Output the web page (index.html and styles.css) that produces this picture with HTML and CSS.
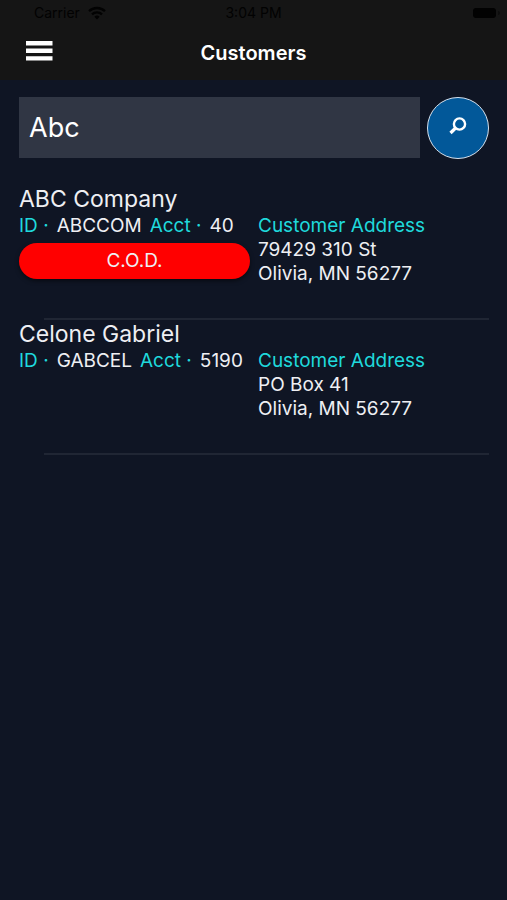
FILE: index.html
```html
<!DOCTYPE html>
<html lang="en">
<head>
<meta charset="utf-8">
<meta name="viewport" content="width=device-width, initial-scale=1">
<title>Customers</title>
<link rel="stylesheet" href="styles.css">
</head>
<body>
<header class="top">
  <div class="status">
    <span class="carrier">Carrier
      <svg width="18" height="14" viewBox="0 0 18 14" fill="none" stroke="currentColor" stroke-width="2.4" aria-hidden="true"><path d="M1 5.2a11.5 11.5 0 0 1 16 0M4 8.4a7.2 7.2 0 0 1 10 0"/><path d="M9 13.4l-2.6-2.7a3.8 3.8 0 0 1 5.2 0z" fill="currentColor" stroke="none"/></svg>
    </span>
    <span>3:04 PM</span>
    <svg class="battery" width="27" height="10" viewBox="0 0 27 10" fill="currentColor" aria-hidden="true"><rect width="23" height="10" rx="3"/><path d="M25 3a2 2 0 0 1 0 4z" opacity=".4"/></svg>
  </div>
  <div class="bar">
    <button class="menu" type="button" aria-label="Menu">
      <svg width="27" height="20" viewBox="0 0 27 20" fill="currentColor" aria-hidden="true"><path d="M0 0h26.500v4.400H0zM0 7.600h26.500V12H0zM0 15.200h26.500v4.400H0z"/></svg>
    </button>
    <h1 class="title">Customers</h1>
  </div>
</header>
<main class="content">
  <form class="search">
    <input class="field" type="text" value="Abc" aria-label="Search customers">
    <button class="go" type="button" aria-label="Search">
      <svg width="18" height="18" viewBox="0 0 18 18" fill="none" stroke="currentColor" aria-hidden="true"><circle cx="10.500" cy="7" r="5.600" stroke-width="2.400"/><path d="M6.600 11L1.500 16" stroke-width="3.200"/></svg>
    </button>
  </form>
  <ul class="list">
    <li class="customer">
      <h2 class="name">ABC Company</h2>
      <div class="details">
        <div>
          <p class="ids"><span class="label">ID ·</span><span class="value">ABCCOM</span><span class="label">Acct ·</span><span class="value">40</span></p>
          <div class="badge">C.O.D.</div>
        </div>
        <address class="address"><span class="label">Customer Address</span><br>79429 310 St<br>Olivia, MN 56277</address>
      </div>
    </li>
    <li class="customer">
      <h2 class="name">Celone Gabriel</h2>
      <div class="details">
        <div>
          <p class="ids"><span class="label">ID ·</span><span class="value">GABCEL</span><span class="label">Acct ·</span><span class="value">5190</span></p>
        </div>
        <address class="address"><span class="label">Customer Address</span><br>PO Box 41<br>Olivia, MN 56277</address>
      </div>
    </li>
  </ul>
</main>
</body>
</html>
```
FILE: styles.css
```css
* {
  box-sizing: border-box;
}

body {
  margin: 0;
  min-height: 100vh;
  background: #0f1524;
  color: #eeeff3;
  font: 19px/24px Inter, "Liberation Sans", sans-serif;
}

h1, h2, p, ul {
  margin: 0;
  padding: 0;
  font-weight: 400;
}

button {
  padding: 0;
  border: 0;
  background: none;
  color: #fff;
}

svg {
  display: block;
}

.top {
  background: #151515;
}

.status {
  display: grid;
  grid-template-columns: 1fr auto 1fr;
  align-items: center;
  height: 26px;
  padding: 0 7px 0 34px;
  color: #020202;
  font-size: 14px;
}

.status > :nth-child(2) {
  margin-right: 27px;
}

.carrier {
  display: flex;
  align-items: center;
  gap: 8px;
}

.battery {
  justify-self: end;
}

.bar {
  display: grid;
  grid-template-columns: 1fr auto 1fr;
  align-items: center;
  height: 54px;
  padding: 0 26px;
}

.menu {
  justify-self: start;
  padding-bottom: 4px;
}

.title {
  color: #fff;
  font-size: 20px;
  font-weight: 600;
}

.content {
  padding: 17px 18px 0 19px;
}

.search {
  display: flex;
  gap: 7px;
}

.field {
  flex: 1;
  min-width: 0;
  height: 61px;
  padding: 0 10px;
  border: 0;
  border-radius: 0;
  background: #303644;
  color: #fff;
  font: 27px Inter, "Liberation Sans", sans-serif;
}

.go {
  display: grid;
  place-items: center;
  width: 62px;
  height: 62px;
  padding-bottom: 4px;
  border: 1px solid #d5e0ec;
  border-radius: 50%;
  background: #025899;
}

.list {
  margin-top: 26px;
  list-style: none;
}

.customer::after {
  content: "";
  display: block;
  height: 2px;
  margin: 32px 0 0 25px;
  background: #202634;
}

.name {
  font-size: 23px;
  line-height: 29px;
}

.details {
  display: grid;
  grid-template-columns: 1fr 1fr;
  gap: 8px;
}

.ids {
  display: flex;
  gap: 8px;
  white-space: nowrap;
}

.label {
  color: #1fd9dc;
}

.badge {
  height: 36px;
  margin-top: 5px;
  border-radius: 18px;
  background: #f00;
  box-shadow: 0 2px 4px rgb(0 0 0 / 50%);
  line-height: 36px;
  text-align: center;
}

.address {
  font-style: normal;
}
```
